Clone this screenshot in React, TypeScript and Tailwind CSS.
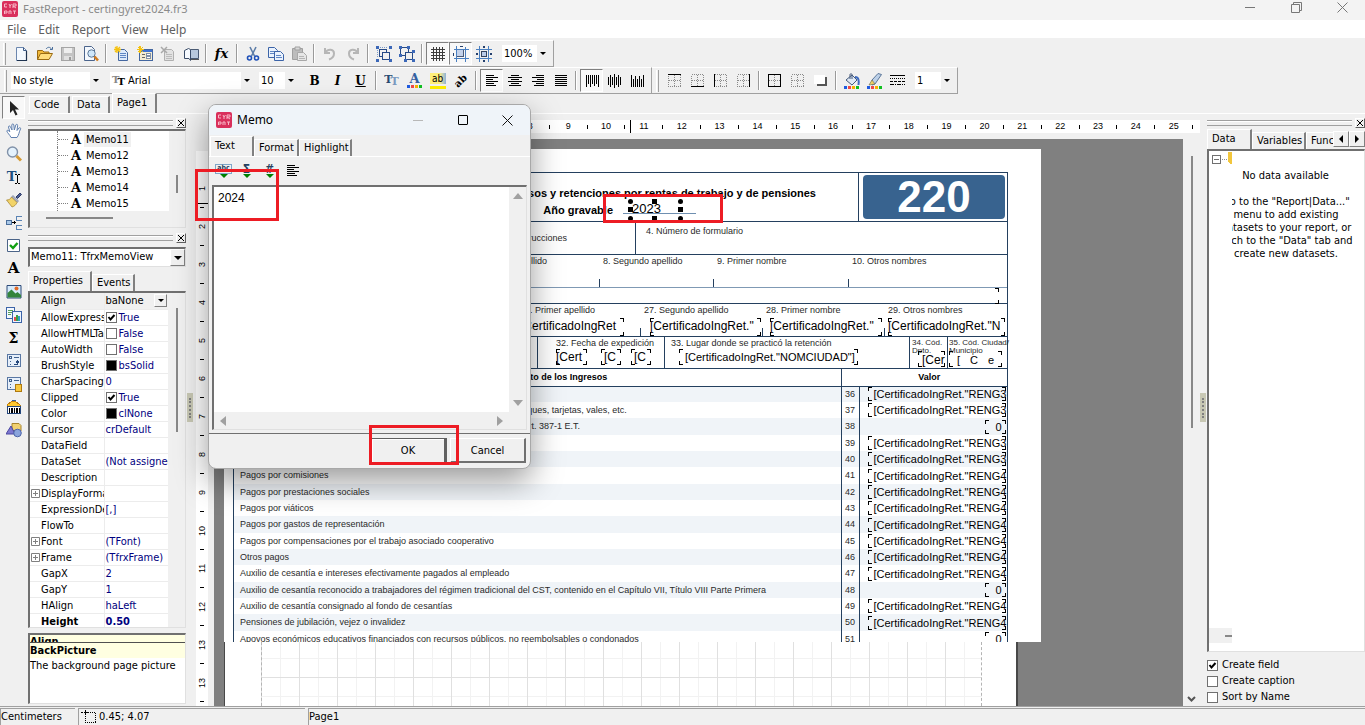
import { type ReactNode } from 'react'

const svgProps = { width: 16, height: 16, viewBox: '0 0 16 16', fill: 'none', 'aria-hidden': true }

const Svg = ({ children, smooth }: { children: ReactNode; smooth?: boolean }) => (
  <svg {...svgProps} shapeRendering={smooth ? 'auto' : 'crispEdges'} className="block shrink-0">{children}</svg>
)

const Palette = () => (
  <>
    <path d="M0 13h3v3H0z" fill="#1f5be0" />
    <path d="M4 13h3v3H4z" fill="#f04848" />
    <path d="M8 13h3v3H8z" fill="#f8b000" />
    <path d="M12 13h3v3h-3z" fill="#10c020" />
  </>
)

const Star = () => <path d="M3 0v7M0 3.5h7M1 1l5 5M6 1L1 6" stroke="#f5c211" strokeWidth="1.3" />

const textLines = (rows: number[][]) => rows.map(([x, y, w]) => <path key={`${x}-${y}`} d={`M${x} ${y}h${w}v1h-${w}z`} fill="#000" />)

const frameDots = (
  <path d="M1.5 1.5h12v12h-12zM7.5 1.5v12M1.5 7.5h12" stroke="#8a8a8a" strokeDasharray="1 1" />
)

const icons: Record<string, ReactNode> = {
  new: <Svg smooth><path d="M2.5 1.5h7l3 3v10h-10z" fill="#f4f9ff" stroke="#6b86ae" /><path d="M9.5 1.5v3h3" stroke="#3d5a85" /><path d="M12.5 5v9.500H3" stroke="#1e3350" strokeWidth="1.2" /></Svg>,
  open: <Svg smooth><path d="M.5 13.5V4.500h5l1.500 1.500h5v2" fill="#f2b93a" stroke="#9a6a12" /><path d="M.5 13.5l3-6h12l-3.500 6z" fill="#ffdc7c" stroke="#9a6a12" /><path d="M9 3c2-2.500 4-2 5.500 0M15.500 1v2.500H13" stroke="#4a6f9c" /></Svg>,
  save: <Svg><path d="M1.500 1.500h13v13h-13z" fill="#c4c4c4" stroke="#a5a5a5" /><path d="M4 2h8v5H4z" fill="#eee" /><path d="M4 10h8v4H4z" fill="#e0e0e0" /><path d="M9 11h2v3H9z" fill="#9c9c9c" /></Svg>,
  preview: <Svg smooth><path d="M1.500.500h7l3 3v11h-10z" fill="#f4f8fd" stroke="#4b648c" /><circle cx="8.500" cy="7.500" r="3.700" fill="#cfe7fa" stroke="#5d7898" /><path d="M11.500 10.500l3.500 4" stroke="#d07a1c" strokeWidth="2.500" /></Svg>,
  newPage: <Svg smooth><path d="M4.500 3.500h6l3 3v8h-9z" fill="#dce9fb" stroke="#4467a0" /><path d="M6 7.500h6M6 9.500h6M6 11.500h6" stroke="#5f86c4" /><Star /></Svg>,
  newDialog: <Svg><path d="M2.500 3.500h13v11h-13z" fill="#f4ecd2" stroke="#4467a0" /><path d="M3 4h12v2H3z" fill="#3f73d0" /><path d="M5 8h3M5 11h3" stroke="#666" /><path d="M9.500 7.500h4v2h-4zM9.500 10.500h4v2h-4z" fill="#fff" stroke="#8090a8" /><Star /></Svg>,
  deletePage: <Svg smooth><path d="M4.500 3.500h7l2 2v9h-9z" fill="#e2e2e2" stroke="#b0b0b0" /><path d="M6 8.500h6M6 10.500h6M6 12.500h6" stroke="#bcbcbc" /><path d="M1 1l6 6M7 1L1 7" stroke="#a8a8a8" strokeWidth="1.500" /></Svg>,
  pageSettings: <Svg smooth><path d="M7.500 3.500h8v9h-8z" fill="#b8c8dc" stroke="#4a5b74" /><path d="M1.500 4.500l4-2 2 1v11l-1.500-2h-4.500z" fill="#f6faff" stroke="#3a4c68" /><path d="M8 13.500h8" stroke="#555" /></Svg>,
  cut: <Svg smooth><path d="M5 1l4.500 9M11 1L6.500 10" stroke="#5d7da8" strokeWidth="1.600" /><circle cx="4.500" cy="12" r="2" stroke="#1e50b8" strokeWidth="1.600" /><circle cx="11.500" cy="12" r="2" stroke="#1e50b8" strokeWidth="1.600" /></Svg>,
  copy: <Svg smooth><path d="M.5 1.500h6l3 3v7h-9z" fill="#eaf2fd" stroke="#3c64a8" /><path d="M2 5.500h5M2 7.500h5" stroke="#5f86c4" /><path d="M6.500 5.500h6l3 3v6h-9z" fill="#eaf2fd" stroke="#3c64a8" /><path d="M8 9.500h5M8 11.500h6" stroke="#5f86c4" /></Svg>,
  paste: <Svg smooth><path d="M1.500 2.500h10v11h-10z" fill="#bcbcbc" stroke="#a0a0a0" /><path d="M4 1h5v3H4z" fill="#d8d8d8" stroke="#a0a0a0" /><path d="M6.500 6.500h6l3 3v5h-9z" fill="#e6e6e6" stroke="#a8a8a8" /><path d="M8 10.500h5M8 12.500h6" stroke="#b4b4b4" /></Svg>,
  undo: <Svg smooth><path d="M3 2v5h5M3.500 6.500C6 2.500 12 3 12 7.500c0 3-2 5-5 6" stroke="#b6b6b6" strokeWidth="2" /></Svg>,
  redo: <Svg smooth><path d="M13 2v5H8M12.500 6.500C10 2.500 4 3 4 7.500c0 3 2 5 5 6" stroke="#b6b6b6" strokeWidth="2" /></Svg>,
  group: <Svg><path d="M3.500 3.500h7v7h-7z" stroke="#274a86" /><path d="M6.500 6.500h7v7h-7z" fill="#f0f0f0" stroke="#274a86" /><path d="M0 0h3v3H0zM13 0h3v3h-3zM0 13h3v3H0zM13 13h3v3h-3z" fill="#3c68b8" /><path d="M4 1.500h8M1.500 4v8" stroke="#7d9bc8" strokeDasharray="1 1" /></Svg>,
  ungroup: <Svg><path d="M1.500 1.500h8v8h-8z" stroke="#274a86" /><path d="M6.500 6.500h7v7h-7z" fill="#f0f0f0" stroke="#274a86" /><path d="M0 0h3v3H0zM8 0h3v3H8zM0 8h3v3H0zM13 4h3v3h-3zM5 13h3v3H5zM13 13h3v3h-3z" fill="#3c68b8" /></Svg>,
  grid: <Svg><path d="M3.500 1v14M6.500 1v14M9.500 1v14M12.500 1v14M1 3.500h14M1 6.500h14M1 9.500h14M1 12.500h14" stroke="#3c3c3c" /></Svg>,
  alignGrid: <Svg><path d="M3.500 0v16M12.500 1v15M1 3.500h15M1 12.500h15" stroke="#4a7fc0" /><path d="M4 4h7v7H4z" fill="#c4d2ea" /><path d="M10.500 4v6.500H4" stroke="#4a5a78" /><path d="M7 0h3v1H7zM0 7h1v3H0z" fill="#24406e" /></Svg>,
  fitGrid: <Svg><path d="M3.500 0v16M12.500 0v16M0 3.500h16M0 12.500h16" stroke="#4a7fc0" /><path d="M5.500 5.500h5v5h-5z" fill="#b9cbe8" stroke="#33435e" /><path d="M7 0h2v2H7zM7 14h2v2H7zM0 7h2v2H0zM14 7h2v2h-2z" fill="#24406e" /></Svg>,
  left: <Svg>{textLines([[2, 2, 8], [2, 4, 12], [2, 6, 7], [2, 8, 12], [2, 10, 8], [2, 12, 10]])}</Svg>,
  center: <Svg>{textLines([[4, 2, 8], [1, 4, 14], [4, 6, 8], [1, 8, 14], [4, 10, 8], [2, 12, 12]])}</Svg>,
  right: <Svg>{textLines([[6, 2, 8], [2, 4, 12], [7, 6, 7], [2, 8, 12], [6, 10, 8], [4, 12, 10]])}</Svg>,
  justify: <Svg>{textLines([[2, 2, 12], [2, 4, 12], [2, 6, 12], [2, 8, 12], [2, 10, 12], [2, 12, 12]])}</Svg>,
  top: <Svg><path d="M2.500 2v12M4.500 2v9M6.500 2v12M8.500 2v9M10.500 2v11M12.500 2v9M14.500 2v12" stroke="#000" /></Svg>,
  middle: <Svg><path d="M1.500 4v8M3.500 2v12M5.500 4v8M7.500 1v14M9.500 4v8M11.500 2v12M13.500 4v8" stroke="#000" /></Svg>,
  bottom: <Svg><path d="M1.500 2v12M3.500 6v8M5.500 3v11M7.500 6v8M9.500 3v11M11.500 6v8M13.500 2v12" stroke="#000" /></Svg>,
  bTop: <Svg>{frameDots}<path d="M1 1h13v1H1z" fill="#000" /></Svg>,
  bBottom: <Svg>{frameDots}<path d="M1 13h13v1H1z" fill="#000" /></Svg>,
  bLeft: <Svg>{frameDots}<path d="M1 1h1v13H1z" fill="#000" /></Svg>,
  bRight: <Svg>{frameDots}<path d="M13 1h1v13h-1z" fill="#000" /></Svg>,
  bAll: <Svg>{frameDots}<path d="M1.500 1.500h12v12h-12z" stroke="#000" /></Svg>,
  bNone: <Svg>{frameDots}</Svg>,
  shadow: <Svg><path d="M4 4h10v9H4z" fill="#555" /><path d="M1 2h11v9H1z" fill="#fff" /></Svg>,
  fill: <Svg smooth><path d="M2 7l6-5 5 5-5 5z" fill="#dfe9f5" stroke="#44597a" /><path d="M6 6V1.500c0-1 2-1 2 0V6" stroke="#44597a" /><path d="M11 4c4 0 4 4 3.500 8" stroke="#3f6bc0" strokeWidth="2" /><Palette /></Svg>,
  pen: <Svg smooth><path d="M5 7l6-6.500 3.500 1L8 11l-3 1z" fill="#bcd0e8" stroke="#5c7799" /><path d="M2 12l3-5 3 4z" fill="#f0d060" stroke="#6a6a50" strokeWidth=".6" /><Palette /></Svg>,
  lineStyle: <Svg><path d="M0 2.500h15" stroke="#000" /><path d="M0 5.500h15" stroke="#000" strokeDasharray="1 1" /><path d="M0 8.500h15" stroke="#000" strokeDasharray="3 1" /><path d="M0 11.500h15" stroke="#000" strokeDasharray="4 1 1 1" /></Svg>,
  arrow: <Svg smooth><path d="M4 1v12l3-3 2.500 5.500 2-1L9 9.500h4z" fill="#222" /></Svg>,
  hand: <Svg smooth><path d="M5 14.500C4 12 1 9.500.8 8c0-1 1.500-1 3 .8L2.500 4c0-1.400 1.500-1.400 2 0L6 7 5.800 2c.2-1.500 1.800-1.300 2 0L8.300 7l1.500-5c.5-1.200 2-.8 1.800.5L11 7.500l2-2.500c1-.8 2 0 1.500 1-1.500 3-1.500 6-3.500 8.500z" fill="#fff" stroke="#5f7fae" /></Svg>,
  zoom: <Svg smooth><circle cx="6.500" cy="6" r="5" fill="#e4f2fd" stroke="#8091a8" strokeWidth="1.400" /><path d="M10.500 10l4.500 4.500" stroke="#d49a35" strokeWidth="3" /></Svg>,
  brush: <Svg smooth><path d="M10 5l4-4 1.500 1.500-4 4z" fill="#4b5d94" stroke="#2f3b66" /><path d="M7 3.500l5.500 5.500-1.500 1.500L5.500 5z" fill="#a9b2c8" stroke="#6d7690" strokeWidth=".6" /><path d="M5.500 5l5.500 5.500C10 13 8 14.500 6 15L.5 8C3 8 4.500 7 5.500 5z" fill="#f2d469" stroke="#a08030" strokeWidth=".7" /></Svg>,
  bands: <Svg><path d="M0 5.500h5v4H0z" fill="#a9c8e8" stroke="#4b6f9c" /><path d="M6 7.500h4M8.500 6v3" stroke="#000" /><path d="M15.500 1.500h-5v4h5M15.500 10.500h-5v4h5" stroke="#5a83b4" /></Svg>,
  check: <Svg smooth><path d="M1.500 1.500h12v12h-12z" fill="#fff" stroke="#4b6488" /><path d="M4 7l3 3 4.500-5" stroke="#12a012" strokeWidth="2.400" /></Svg>,
  picture: <Svg smooth><path d="M1 1.500h14v12.500H1z" fill="#d6eafc" stroke="#2c4a78" /><path d="M1.500 13.500V9l4-3.500 4 4 2-1.500 3.500 3v2.500z" fill="#33843c" /><circle cx="10.500" cy="4.500" r="2" fill="#e06a28" /></Svg>,
  subreport: <Svg><path d="M.5.500h8v11h-8z" fill="#f4f8ff" stroke="#3c64a8" /><path d="M2 3h5M2 5h5M2 7h3" stroke="#58a058" /><path d="M6.500 4.500h9v11h-9z" fill="#eef5ff" stroke="#3c64a8" /><path d="M8 10h2v4H8z" fill="#e05050" /><path d="M10 8h2v6h-2z" fill="#40a040" /><path d="M12 9h2v5h-2z" fill="#30a0c0" /></Svg>,
  crosstab: <Svg><path d="M1.500 1.500h13v12h-13z" fill="#e6effa" stroke="#5a78a4" /><path d="M3.500 3.500h2v2h-2zM8 4.500h5M4 8v1M4 11v1" stroke="#41618e" /><path d="M8 11.500h3.500V8M10 9.500l1.500-2 1.500 2" stroke="#24477c" /></Svg>,
  dbcross: <Svg><path d="M1.500 1.500h13v12h-13z" fill="#e6effa" stroke="#5a78a4" /><path d="M3.500 3.500h2v2h-2zM8 4.500h5M4 8v1M4 11v1" stroke="#41618e" /><path d="M9.500 8.500h6v7h-6z" fill="#f8c840" stroke="#b07a10" /></Svg>,
  barcode: <Svg><path d="M1 6l5-4h3l5 4v2H1z" fill="#ffc830" stroke="#c08010" /><path d="M6 2V1h3v1" stroke="#3c64a8" /><path d="M1.500 7.500h13v7h-13z" fill="#fff" stroke="#24477c" /><path d="M3 9h1v5H3zM5 9h2v5H5zM8 9h1v5H8zM10 9h2v5h-2zM13 9h1v5h-1z" fill="#000" /></Svg>,
  shapes: <Svg smooth><path d="M6 1.500h7l2 2V9H8L6 7z" fill="#f0d070" stroke="#a8842c" /><path d="M0 12l5-8 4 8z" fill="#7d78d0" stroke="#4b46a0" /><circle cx="11.500" cy="11" r="3.800" fill="#8aa4dc" stroke="#4b62a8" /></Svg>,
}

const glyphs: Record<string, ReactNode> = {
  fx: <span className="font-['DejaVu_Serif',serif] text-[13px] font-bold italic">fx</span>,
  bold: <span className="font-['DejaVu_Serif',serif] text-[12px] font-bold">B</span>,
  italic: <span className="font-['DejaVu_Serif',serif] text-[12px] font-bold italic">I</span>,
  underline: <span className="font-['DejaVu_Serif',serif] text-[12px] font-bold underline">U</span>,
  font: <span className="flex font-['DejaVu_Serif',serif] text-[11px] font-bold text-[#274a70]">T<span className="-ml-0.5 mt-0.5 text-[#7c9ac0]">T</span></span>,
  color: (
    <span className="flex flex-col items-center font-['DejaVu_Serif',serif] text-[13px] leading-[12px] font-bold text-[#3560a0]">
      A
      <svg width="16" height="4" viewBox="0 13 16 4" aria-hidden><Palette /></svg>
    </span>
  ),
  highlight: (
    <span className="flex w-4 flex-col">
      <span className="bg-linear-to-r from-[#fff07a] from-60% to-[#8fb0d8] text-[10px] leading-[11px]">ab</span>
      <span className="mt-0.5 h-[3px] bg-[#ffee00]" />
    </span>
  ),
  rotate: <span className="-rotate-45 font-['DejaVu_Serif',serif] text-[10px] font-bold">ab</span>,
  text: (
    <span className="flex items-center font-['DejaVu_Serif',serif] text-[13px] font-bold text-[#1f5080]">
      T
      <svg width="5" height="10" viewBox="0 0 5 10" shapeRendering="crispEdges" className="mt-1 -ml-px" aria-hidden><path d="M0 .500h2M3 .500h2M2.500 1v8M0 9.500h2M3 9.500h2" stroke="#000" /></svg>
    </span>
  ),
  memo: <span className="font-['DejaVu_Serif',serif] text-[15px] font-bold">A</span>,
  sigma: <span className="font-['DejaVu_Serif',serif] text-[14px] font-bold">Σ</span>,
}

const mainTools = ['new', 'open', 'save', 'preview', '|', 'newPage', 'newDialog', 'deletePage', 'pageSettings', '|', 'fx', '|', 'cut', 'copy', 'paste', '|', 'undo', 'redo', '|', 'group', 'ungroup', '|', 'grid*', 'alignGrid*', 'fitGrid']
const textTools = ['bold', 'italic', 'underline', '|', 'font', 'color', 'highlight', 'rotate', '|', 'left*', 'center', 'right', 'justify', '|', 'top*', 'middle', 'bottom']
const frameTools = ['bTop', 'bBottom', 'bLeft', 'bRight', '|', 'bAll', 'bNone', 'shadow', '|', 'fill', 'pen', 'lineStyle']
const sideTools = ['arrow*', 'hand', 'zoom', 'text', 'brush', 'bands', 'check', 'memo', 'picture', 'subreport', 'sigma', 'crosstab', 'dbcross', 'barcode', 'shapes']

const ToolButton = ({ name }: { name: string }) => {
  const pressed = name.endsWith('*')
  const id = name.replace('*', '')
  return (
    <button
      aria-label={id}
      aria-pressed={pressed}
      className={`flex h-[23px] w-[23px] shrink-0 items-center justify-center leading-none ${pressed ? 'border border-t-[#808080] border-l-[#808080] border-r-white border-b-white bg-[#f8f8f8]' : ''}`}
    >
      {icons[id] ?? glyphs[id]}
    </button>
  )
}

const Tools = ({ items }: { items: string[] }) => (
  <>
    {items.map((t, i) => t === '|'
      ? <span key={i} className="mx-[3px] h-[19px] w-[2px] border-l border-[#9a9a9a] bg-white" />
      : <ToolButton key={i} name={t} />)}
  </>
)

const Triangle = () => <span className="block border-x-[3px] border-t-[3px] border-x-transparent border-t-black" />

const Combo = ({ label, value, className, icon }: { label: string; value: string; className: string; icon?: ReactNode }) => (
  <div className={`relative flex h-[17px] shrink-0 items-center bg-white ${className}`}>
    {icon}
    <select aria-label={label} className="h-full w-full min-w-0 flex-1 appearance-none bg-transparent pl-0.5 leading-none outline-none">
      <option>{value}</option>
    </select>
    <span className="pointer-events-none absolute top-0 right-0 flex h-full w-3 items-center justify-center bg-[#f0f0f0]"><Triangle /></span>
  </div>
)

const Grip = () => <span className="mr-1 h-[22px] w-[3px] shrink-0 border-r border-r-[#a0a0a0] border-l border-l-white" />

const AppIcon = () => (
  <svg width="16" height="16" viewBox="0 0 16 16" className="shrink-0" aria-hidden>
    <rect width="16" height="16" rx="2" fill="#d9305c" />
    <path d="M5 3H2.500v3H5M7 3l1 2v2M9.500 3L8 5M11 7V3h3v2h-3l3 2M2.500 13v-3H5v2H2.500M7 13v-3h2v3M11 10h3M12.500 10v3" stroke="#f8b8c8" fill="none" />
  </svg>
)

const PanelGrip = () => (
  <div className="flex h-[11px] items-center gap-[3px]">
    <span className="h-[6px] flex-1 border-y border-[#a0a0a0] bg-[#f0f0f0] shadow-[inset_0_1px_0_#fff]" />
    <button aria-label="Close panel" className="flex h-[10px] w-[10px] items-center justify-center border border-t-white border-l-white border-r-[#606060] border-b-[#606060]">
      <svg width="6" height="6" viewBox="0 0 6 6" aria-hidden><path d="M0 0l6 6M6 0L0 6" stroke="#000" /></svg>
    </button>
  </div>
)

const Tab = ({ children, active, className = '' }: { children: ReactNode; active?: boolean; className?: string }) => (
  <button
    role="tab"
    aria-selected={!!active}
    className={`shrink-0 border-t border-r-2 border-l border-t-white border-r-[#808080] border-l-white text-left whitespace-nowrap ${active ? 'h-5 pb-0.5' : 'h-[17px]'} px-1 leading-4 ${className}`}
  >
    {children}
  </button>
)

const CheckBox = ({ label, checked, className = 'gap-1' }: { label: string; checked?: boolean; className?: string }) => (
  <label className={`flex items-center ${className}`}>
    <span className="relative h-[11px] w-[11px] shrink-0">
      <input type="checkbox" defaultChecked={checked} className="peer absolute inset-0 appearance-none border border-[#707070] bg-white" />
      <svg viewBox="0 0 11 11" className="pointer-events-none absolute inset-0 hidden peer-checked:block" aria-hidden><path d="M2.500 5l2 2.500L8.500 3" stroke="#000" strokeWidth="2" fill="none" /></svg>
    </span>
    {label}
  </label>
)

const sunken = 'border-t-2 border-l-2 border-r border-b border-t-[#707070] border-l-[#707070] border-r-[#e0e0e0] border-b-[#e0e0e0]'

type Property = { name: string; value?: string; kind?: 'on' | 'off' | 'swatch'; plus?: boolean }

const properties: Property[] = [
  { name: 'Align', value: 'baNone' },
  { name: 'AllowExpressions', value: 'True', kind: 'on' },
  { name: 'AllowHTMLTags', value: 'False', kind: 'off' },
  { name: 'AutoWidth', value: 'False', kind: 'off' },
  { name: 'BrushStyle', value: 'bsSolid', kind: 'swatch' },
  { name: 'CharSpacing', value: '0' },
  { name: 'Clipped', value: 'True', kind: 'on' },
  { name: 'Color', value: 'clNone', kind: 'swatch' },
  { name: 'Cursor', value: 'crDefault' },
  { name: 'DataField' },
  { name: 'DataSet', value: '(Not assigned)' },
  { name: 'Description' },
  { name: 'DisplayFormat', plus: true },
  { name: 'ExpressionDelimiters', value: '[,]' },
  { name: 'FlowTo' },
  { name: 'Font', value: '(TFont)', plus: true },
  { name: 'Frame', value: '(TfrxFrame)', plus: true },
  { name: 'GapX', value: '2' },
  { name: 'GapY', value: '1' },
  { name: 'HAlign', value: 'haLeft' },
  { name: 'Height', value: '0.50' },
]

const PropertyGrid = () => (
  <div className={`flex h-[337px] shrink-0 overflow-hidden ${sunken}`}>
    <table className="w-[138px] table-fixed border-collapse bg-white">
      <tbody>
        {properties.map((p, i) => (
          <tr key={p.name} className={`h-4 border-b border-[#ececec] ${i === 0 ? 'bg-[#f0f0f0]' : ''} ${p.name === 'Height' ? 'font-bold' : ''}`}>
            <th scope="row" className="w-[74px] overflow-hidden border-r border-[#ececec] p-0 text-left leading-[15px] [font-weight:inherit]">
              <div className="flex h-[15px] items-center whitespace-nowrap">
                <span className="w-[11px] shrink-0 pl-px">
                  {p.plus && <svg width="9" height="9" viewBox="0 0 9 9" aria-hidden><path d="M.5.500h8v8h-8zM2 4.500h5M4.500 2v5" stroke="#808080" fill="#fff" /></svg>}
                </span>
                {p.name}
              </div>
            </th>
            <td className="overflow-hidden p-0 pl-px leading-[15px] text-[#000080]">
              <div className="flex h-[15px] items-center gap-0.5 whitespace-nowrap">
                {i === 0 ? (
                  <>
                    <span className="flex-1 text-black">{p.value}</span>
                    <button aria-label="Choose Align" className="mr-px flex h-[13px] w-[13px] items-center justify-center border border-r-[#808080] border-b-[#808080] border-t-white border-l-white bg-[#f0f0f0]"><Triangle /></button>
                  </>
                ) : p.kind === 'on' || p.kind === 'off' ? (
                  <CheckBox label={p.value!} checked={p.kind === 'on'} className="gap-0.5" />
                ) : (
                  <>
                    {p.kind === 'swatch' && <span className="h-[11px] w-[11px] border border-[#707070] bg-black" />}
                    {p.value}
                  </>
                )}
              </div>
            </td>
          </tr>
        ))}
      </tbody>
    </table>
    <div className="flex flex-1 flex-col items-center pt-[15px]"><span className="h-[124px] w-[2px] bg-[#888]" /></div>
  </div>
)

const LeftPanel = () => (
  <div className="flex w-[158px] shrink-0 flex-col pt-[3px]">
    <PanelGrip />
    <div className={`mt-px flex h-[99px] shrink-0 flex-col ${sunken}`}>
      <div className="flex">
        <ul className="w-[139px] bg-white pl-[27px]">
          {['Memo11', 'Memo12', 'Memo13', 'Memo14', 'Memo15'].map((m, i) => (
            <li key={m} className="flex h-4 items-center border-l border-dotted border-[#808080]">
              <span className="w-2.5 border-t border-dotted border-[#808080]" />
              <span className="w-4 text-center font-['DejaVu_Serif',serif] text-[13px] leading-none font-bold">A</span>
              <span className={`px-0.5 leading-[15px] ${i === 0 ? 'bg-[#f0f0f0]' : ''}`}>{m}</span>
            </li>
          ))}
        </ul>
        <div className="flex flex-1 items-end justify-center pb-[18px]"><span className="h-[18px] w-[2px] bg-[#888]" /></div>
      </div>
      <span className="mt-1.5 ml-4 h-[2px] w-[67px] bg-[#888]" />
    </div>
    <div className="mt-[4px]"><PanelGrip /></div>
    <div className={`relative mt-[4px] flex h-[20px] shrink-0 items-center bg-white ${sunken}`}>
      <select aria-label="Object" className="w-full appearance-none pl-px outline-none"><option>Memo11: TfrxMemoView</option></select>
      <span className="pointer-events-none absolute top-0 right-0 flex h-full w-[15px] items-center justify-center border border-r-[#808080] border-b-[#808080] border-t-white border-l-white bg-[#f0f0f0]"><span className="border-x-[4px] border-t-[4px] border-x-transparent border-t-black" /></span>
    </div>
    <div role="tablist" className="mt-1 flex shrink-0 items-end">
      <Tab active className="w-[64px]">Properties</Tab>
      <Tab className="w-[43px]">Events</Tab>
    </div>
    <PropertyGrid />
    <div className={`mt-[5px] flex h-[71px] shrink-0 flex-col bg-white leading-[15px] ${sunken}`}>
      <div className="h-[8px] shrink-0 overflow-hidden border-b border-[#505050] bg-[#ffffe1] font-bold leading-[14px]">Align</div>
      <div className="bg-[#ffffe1] font-bold">BackPicture</div>
      <div className="whitespace-nowrap">The background page picture</div>
    </div>
  </div>
)

/* corner brackets that mark the edges of a text object */
const Memo = ({ children, className = '' }: { children?: ReactNode; className?: string }) => (
  <div className={`relative shrink-0 font-['Liberation_Sans',sans-serif] whitespace-nowrap text-black ${className}`}>
    {children}
    <span className="absolute top-0 left-0 size-1 border-t border-l border-black" />
    <span className="absolute top-0 right-0 size-1 border-t border-r border-black" />
    <span className="absolute bottom-0 left-0 size-1 border-b border-l border-black" />
    <span className="absolute right-0 bottom-0 size-1 border-r border-b border-black" />
  </div>
)

const NameCell = ({ label, className, children }: { label: string; className: string; children?: ReactNode }) => (
  <div className={`flex shrink-0 ${className}`}>
    <span className="h-2 w-px self-end bg-[#24405f]" />
    <div className="flex flex-1 flex-col pl-[3px] whitespace-nowrap">
      <span className="leading-3">{label}</span>
      {children}
    </div>
  </div>
)

const rows = [
  ['36', 'Pagos por salarios', '3'],
  ['37', 'Pagos realizados con los bonos electrónicos o de papel de servicio, cheques, tarjetas, vales, etc.', '3'],
  ['38', 'Valor del exceso de los pagos por alimentación mayores a las 41 UVT, art. 387-1 E.T.', ''],
  ['39', 'Pagos por honorarios', '3'],
  ['40', 'Pagos por servicios', '3'],
  ['41', 'Pagos por comisiones', '4'],
  ['42', 'Pagos por prestaciones sociales', '4'],
  ['43', 'Pagos por viáticos', '4'],
  ['44', 'Pagos por gastos de representación', '4'],
  ['45', 'Pagos por compensaciones por el trabajo asociado cooperativo', '4'],
  ['46', 'Otros pagos', '4'],
  ['47', 'Auxilio de cesantía e intereses efectivamente pagados al empleado', '4'],
  ['48', 'Auxilio de cesantía reconocido a trabajadores del régimen tradicional del CST, contenido en el Capítulo VII, Título VIII Parte Primera', ''],
  ['49', 'Auxilio de cesantía consignado al fondo de cesantías', '4'],
  ['50', 'Pensiones de jubilación, vejez o invalidez', '4'],
  ['51', 'Apoyos económicos educativos financiados con recursos públicos, no reembolsables o condonados', ''],
]

const handles = [
  '-top-0.5 -left-0.5 rounded-full', '-top-0.5 left-[22px]', '-top-0.5 -right-0.5 rounded-full',
  'top-1.5 -left-0.5', 'top-1.5 -right-0.5',
  '-bottom-0.5 -left-0.5 rounded-full', '-bottom-0.5 left-[22px]', '-bottom-0.5 -right-0.5 rounded-full',
]

const ReportForm = () => (
  <div className="mt-[23px] ml-2 w-[775px] border border-b-0 border-[#24405f] font-['Liberation_Sans',sans-serif] text-[9px] text-[#2a2a2a]">
    <div className="flex h-[49px] border-b border-[#24405f]">
      <div className="flex w-[625px] shrink-0 flex-col items-end border-r border-[#24405f] pt-3 font-bold text-black">
        <div className="pr-[42px] text-[11px] leading-4 whitespace-nowrap">Certificado de ingresos y retenciones por rentas de trabajo y de pensiones</div>
        <div className="flex pr-[162px] text-[11px] leading-[18px] whitespace-nowrap">
          Año gravable
          <div className="ml-2.5 h-[13px] w-[73px] border-b border-[#6f8fb0] pl-[7px] font-normal">
            <div className="relative h-[18px] w-[51px] pl-0.5 text-[13px] leading-4">
              2023
              {handles.map((h) => <span key={h} className={`absolute size-[5px] bg-black ${h}`} />)}
            </div>
          </div>
        </div>
      </div>
      <div className="flex-1 p-[2px] pl-1">
        <div className="flex h-[44px] items-center justify-center rounded-[4px] bg-[#38638f] text-[44px] leading-none font-bold text-white">220</div>
      </div>
    </div>
    <div className="flex h-[33px] border-b border-[#24405f] whitespace-nowrap">
      <div className="w-[402px] border-r border-[#24405f] pt-2.5 pr-[68px] text-right">Lea cuidadosamente las instrucciones</div>
      <div className="pt-[3px] pl-2.5">4. Número de formulario</div>
    </div>
    <div className="flex h-[33px] border-b border-[#7f99b4]">
      <div className="w-[365px] pr-[52px] text-right leading-3">7. Primer apellido</div>
      <NameCell label="8. Segundo apellido" className="w-[114px]" />
      <NameCell label="9. Primer nombre" className="w-[135px]" />
      <NameCell label="10. Otros nombres" className="flex-1" />
    </div>
    <div className="flex h-4 justify-end border-b border-[#24405f] pr-2"><Memo className="h-4 w-[500px]" /></div>
    <div className="flex h-[33px] border-b border-[#24405f]">
      <NameCell label="26. Primer apellido" className="ml-[282px] w-[124px]"><Memo className="mt-0.5 h-[18px] w-[104px] text-[12px] leading-4">[CertificadoIngRet</Memo></NameCell>
      <NameCell label="27. Segundo apellido" className="w-[122px]"><Memo className="mt-0.5 ml-[6px] h-[18px] w-[111px] text-[12px] leading-4">[CertificadoIngRet."</Memo></NameCell>
      <NameCell label="28. Primer nombre" className="w-[122px]"><Memo className="mt-0.5 ml-[4px] h-[18px] w-[112px] text-[12px] leading-4">[CertificadoIngRet."</Memo></NameCell>
      <NameCell label="29. Otros nombres" className="flex-1"><Memo className="mt-0.5 h-[18px] w-[117px] text-[12px] leading-4">[CertificadoIngRet."N</Memo></NameCell>
    </div>
    <div className="flex h-8 border-b border-[#24405f] whitespace-nowrap">
      <div className="w-[304px] shrink-0 border-r border-[#24405f]" />
      <div className="w-[127px] shrink-0 border-r border-[#24405f] pl-[18px]">
        <div className="leading-3">32. Fecha de expedición</div>
        <div className="flex text-[12px] leading-4">
          <Memo className="h-4 w-[31px]">[Cert</Memo>
          <Memo className="ml-[14px] h-4 w-[20px] pl-[3px]">[C</Memo>
          <Memo className="ml-[10px] h-4 w-[20px] pl-[3px]">[C</Memo>
        </div>
      </div>
      <div className="w-[245px] shrink-0 border-r border-[#24405f] pl-[6px]">
        <div className="leading-3">33. Lugar donde se practicó la retención</div>
        <Memo className="ml-2 h-4 w-[179px] pl-1.5 text-[11px] leading-4">[CertificadoIngRet."NOMCIUDAD"]</Memo>
      </div>
      <div className="w-[38px] shrink-0 border-r border-[#24405f] pt-0.5 pl-0.5 text-[8px] leading-2">
        34. Cód.<br />Dpto.
        <Memo className="-mt-1 ml-1.5 h-4 w-[27px] pl-1 text-[12px] leading-[18px]">[Cer</Memo>
      </div>
      <div className="pt-0.5 pl-px text-[8px] leading-2">
        35. Cód. Ciudad/<br />Municipio
        <Memo className="-mt-1 h-4 w-[53px] text-[11px] leading-[18px]"><span className="flex gap-2.5 pl-2"><span>[</span><span>C</span><span>e</span></span></Memo>
      </div>
    </div>
    <table className="w-full table-fixed border-collapse">
      <colgroup><col className="w-[607px]" /><col className="w-[18px]" /><col /></colgroup>
      <thead>
        <tr className="h-[17px] border-b border-[#24405f] text-[9px] text-black">
          <th className="border-r border-[#24405f] p-0 pl-[30px] leading-none">Concepto de los Ingresos</th>
          <th colSpan={2} className="p-0 pl-2.5 leading-none">Valor</th>
        </tr>
      </thead>
      <tbody>
        {rows.map(([num, text, reng], i) => (
          <tr key={num} className={`${i % 3 === 2 ? 'h-[17px]' : 'h-4'} ${i % 2 === 0 ? 'bg-[#f0f4f8]' : ''}`}>
            <td className="border-r border-[#24405f] p-0 pl-[6px] leading-none whitespace-nowrap">{text}</td>
            <td className="border-r border-[#24405f] p-0 text-center leading-none">{num}</td>
            <td className="p-0 leading-none">
              {reng
                ? <Memo className="ml-2 h-[14px] w-[138px] pl-1.5 text-[11px] leading-[15px]">{`[CertificadoIngRet."RENG${reng}`}</Memo>
                : <Memo className="ml-[125px] h-[14px] w-[21px] pr-1 text-right text-[11px] leading-[15px]">0</Memo>}
            </td>
          </tr>
        ))}
      </tbody>
    </table>
  </div>
)

const Splitter = () => (
  <div className="flex h-[29px] w-[6px] items-center justify-center bg-[#c8c8b4]"><span className="h-5 w-px border-l-2 border-dotted border-[#808080]" /></div>
)

const Designer = () => (
  <div className="flex min-w-0 flex-1 flex-col pl-px">
    <div className="mt-1.5 flex h-[13px] shrink-0 overflow-hidden">
      <div className="w-2 shrink-0" />
      <div className="relative ml-[52px] flex flex-1 items-center bg-white font-['Liberation_Sans',sans-serif] text-[9px]">
        <div className="flex w-[946px] shrink-0">
          {Array.from({ length: 25 }, (_, i) => (
            <span key={i} className="flex flex-1 items-center justify-center">
              <span className="flex-1 text-center">{i + 1}</span>
              <span className="h-1 w-px bg-black" />
            </span>
          ))}
        </div>
        <span className="absolute top-0 left-[383px] h-full w-px bg-black" />
      </div>
      <div className="w-[7px] shrink-0" />
    </div>
    <div className="mt-1.5 flex min-h-0 flex-1">
      <div className="flex w-[9px] shrink-0 flex-col pt-[254px]"><Splitter /></div>
      <div className="relative mt-3 mr-1.5 flex w-3 shrink-0 flex-col overflow-hidden bg-white pt-[19px] font-['Liberation_Sans',sans-serif] text-[9px]">
        {[1, 2, 3, 4, 5, 6, 7, 8, 9, 10, 11, 12, 13, 13].map((n, i) => (
          <span key={i} className="flex h-[38px] shrink-0 flex-col items-center">
            <span className="flex flex-1 rotate-180 items-center justify-center leading-3 [writing-mode:vertical-rl]">{n}</span>
            <span className="h-px w-1 bg-black" />
          </span>
        ))}
        <span className="absolute top-[52px] left-0 h-px w-full bg-black" />
      </div>
      <div className="flex min-w-0 flex-1 flex-col overflow-hidden bg-[#808080] pt-2.5 pl-2.5">
        <div className="z-10 h-[493px] w-[817px] shrink-0 overflow-hidden bg-white pl-px"><ReportForm /></div>
        <div className="flex w-[794px] flex-1 border-r-2 border-l border-[#484848] bg-white pr-[34px] pl-[36px]">
          <div className="flex-1 border-x border-dashed border-[#b4b4b4] bg-[linear-gradient(to_right,transparent_37px,#e0e0e0_37px),linear-gradient(transparent_37px,#e0e0e0_37px),linear-gradient(to_right,transparent_18px,#f2f2f2_18px,#f2f2f2_19px,transparent_19px),linear-gradient(transparent_18px,#f2f2f2_18px,#f2f2f2_19px,transparent_19px)] bg-size-[38px_38px] bg-position-[0_-2px]" />
        </div>
      </div>
      <div className="flex w-[17px] shrink-0 flex-col items-center justify-between pt-[17px] pb-1">
        <span className="h-[272px] w-[2px] bg-[#888]" />
        <svg width="9" height="6" viewBox="0 0 9 6" aria-hidden><path d="M1 1l3.500 3.500L8 1" stroke="#555" strokeWidth="2" fill="none" /></svg>
      </div>
      <div className="w-[7px] shrink-0 pt-[254px]"><Splitter /></div>
    </div>
  </div>
)

const RightPanel = () => (
  <div className="flex w-[158px] shrink-0 flex-col pt-[3px]">
    <PanelGrip />
    <div className="mt-px flex items-end">
      <div role="tablist" className="flex min-w-0 flex-1 items-end overflow-hidden">
        <Tab active className="w-[45px]">Data</Tab>
        <Tab className="w-[54px]">Variables</Tab>
        <Tab className="w-[60px]">Functions</Tab>
      </div>
      <button aria-label="Previous tab" className="flex h-4 w-4 items-center justify-center self-center border border-t-white border-l-white border-r-[#808080] border-b-[#808080]"><span className="border-y-[4px] border-r-[4px] border-y-transparent border-r-black" /></button>
      <button aria-label="Next tab" className="flex h-4 w-4 items-center justify-center self-center border border-t-white border-l-white border-r-[#808080] border-b-[#808080]"><span className="border-y-[4px] border-l-[4px] border-y-transparent border-l-black" /></button>
    </div>
    <div className={`flex h-[503px] shrink-0 flex-col bg-white ${sunken}`}>
      <div className="flex h-[18px] items-center pl-[3px]">
        <svg width="24" height="16" viewBox="0 0 24 16" shapeRendering="crispEdges" aria-hidden>
          <path d="M.5 3.500h8v8h-8zM2 7.500h5" stroke="#707070" fill="#fff" />
          <path d="M10 7.500h5" stroke="#909090" strokeDasharray="1 1" />
          <path d="M16 0h4v12h-2l-2-2z" fill="#f2c63c" />
        </svg>
      </div>
      <p className="pr-0.5 text-center leading-[13px]">No data available</p>
      <div className="mt-[13px] ml-[23px] overflow-hidden leading-[13px] whitespace-nowrap">
        <p className="-ml-6 text-center">Go to the "Report|Data..."</p>
        <p className="-ml-6 text-center">menu to add existing</p>
        <p className="-ml-6 text-center">datasets to your report, or</p>
        <p className="-ml-8 text-center">switch to the "Data" tab and</p>
        <p className="-ml-6 text-center">create new datasets.</p>
      </div>
      <div className="mt-auto mb-2 flex h-[15px] w-[23px] items-center justify-end bg-[#f0f0f0]"><span className="h-[2px] w-[7px] bg-[#888]" /></div>
    </div>
    <div className="mt-[5px] flex flex-col leading-4">
      <CheckBox label="Create field" checked />
      <CheckBox label="Create caption" />
      <CheckBox label="Sort by Name" />
    </div>
  </div>
)

const MemoDialog = () => (
  <div role="dialog" aria-label="Memo" className="absolute top-[104px] left-[208px] z-20 flex h-[365px] w-[323px] flex-col overflow-hidden rounded-lg border border-[#a8a8a8] bg-[#f0f0f0] shadow-[0_12px_32px_rgba(0,0,0,0.4)]">
    <div className="flex h-[30px] shrink-0 items-center bg-[#eff4f9] pl-[7px]">
      <AppIcon />
      <span className="ml-[5px] flex-1 font-['Noto_Sans',sans-serif] text-[12px]">Memo</span>
      <button aria-label="Minimize" className="flex w-[45px] justify-center"><span className="h-px w-2.5 bg-[#b8b8b8]" /></button>
      <button aria-label="Maximize" className="flex w-[45px] justify-center"><span className="size-2.5 rounded-[1px] border border-black" /></button>
      <button aria-label="Close" className="flex w-[45px] justify-center"><svg width="11" height="11" viewBox="0 0 11 11" aria-hidden><path d="M.5.500l10 10M10.500.500l-10 10" stroke="#111" /></svg></button>
    </div>
    <div role="tablist" className="mt-px flex items-end border-b border-white pl-px">
      <Tab active className="w-[44px]">Text</Tab>
      <Tab className="w-[45px]">Format</Tab>
      <Tab className="w-[53px]">Highlight</Tab>
    </div>
    <div className="flex h-[28px] shrink-0 items-center pl-[3px]">
      {['abc', 'Σ', '#'].map((t) => (
        <button key={t} aria-label={`Insert ${t}`} className="flex h-5 w-[23px] flex-col items-center justify-center">
          <span className={`h-[10px] font-bold text-[#24405f] ${t === 'abc' ? 'border border-[#7fa6c8] px-px text-[7px] leading-[7px]' : 'text-[12px] leading-[10px]'}`}>{t}</span>
          <span className="border-x-[4px] border-t-[4px] border-x-transparent border-t-[#008000]" />
        </button>
      ))}
      <ToolButton name="left" />
    </div>
    <div className={`mx-[3px] grid h-[245px] shrink-0 grid-cols-[1fr_17px] grid-rows-[1fr_17px] ${sunken}`}>
      <textarea aria-label="Memo text" defaultValue="2024" className="resize-none bg-white px-1 py-[3px] font-['Liberation_Sans',sans-serif] text-[12px] leading-4 outline-none" />
      <div className="flex flex-col items-center justify-between py-1.5">
        <span className="border-x-[5px] border-b-[6px] border-x-transparent border-b-[#a0a0a0]" />
        <span className="border-x-[5px] border-t-[6px] border-x-transparent border-t-[#a0a0a0]" />
      </div>
      <div className="flex items-center justify-between px-1.5">
        <span className="border-y-[5px] border-r-[6px] border-y-transparent border-r-[#a0a0a0]" />
        <span className="border-y-[5px] border-l-[6px] border-y-transparent border-l-[#a0a0a0]" />
      </div>
    </div>
    <div className="mt-[3px] flex flex-1 justify-end gap-[3px] border-t border-[#707070] pt-1 pr-1">
      <button className="h-[25px] w-[76px] border border-r-[3px] border-[#606060] border-b-[#606060] pt-0.5 shadow-[inset_1px_1px_0_#fff]">OK</button>
      <button className="h-[25px] w-[76px] border border-r-2 border-b-2 border-t-white border-l-white border-r-[#707070] border-b-[#707070] pt-0.5">Cancel</button>
    </div>
  </div>
)

export default function App() {
  return (
    <div className="relative flex h-screen flex-col overflow-hidden bg-[#f0f0f0] font-['DejaVu_Sans_Condensed','DejaVu_Sans',sans-serif] text-[11px] text-black">
      <header className="flex h-5 shrink-0 items-start bg-[#f3f3f3] font-['Noto_Sans',sans-serif] text-[#8a8a8a]">
        <div className="flex flex-1 items-center gap-[5px] pl-0.5"><AppIcon /><span className="leading-[17px]">FastReport - certingyret2024.fr3</span></div>
        <div className="flex h-[14px] items-center">
          <button aria-label="Minimize" className="flex w-[46px] justify-center"><span className="h-px w-2.5 bg-[#777]" /></button>
          <button aria-label="Restore" className="flex w-[46px] justify-center"><svg width="11" height="11" viewBox="0 0 11 11" fill="none" stroke="#777" aria-hidden><path d="M.5 2.500h8v8h-8zM2.500 2.500v-2h8v8h-2" /></svg></button>
          <button aria-label="Close" className="flex w-[46px] justify-center"><svg width="11" height="11" viewBox="0 0 11 11" aria-hidden><path d="M.5.500l10 10M10.500.500l-10 10" stroke="#777" /></svg></button>
        </div>
      </header>
      <nav className="flex h-[18px] shrink-0 items-center gap-3 bg-white pt-0.5 pl-[7px] font-['Noto_Sans',sans-serif] text-[12px] text-[#606060]">
        {['File', 'Edit', 'Report', 'View', 'Help'].map((m) => <button key={m}>{m}</button>)}
      </nav>

      <div className="mt-0.5 flex shrink-0">
        <div className="flex h-[27px] items-center border-t border-r border-b border-t-white border-r-[#a0a0a0] border-b-[#a0a0a0] pr-1 pl-[3px]">
          <Grip />
          <Tools items={mainTools} />
          <Combo label="Zoom" value="100%" className="ml-[7px] w-[47px]" />
        </div>
      </div>
      <div className="flex shrink-0">
        <div className="flex h-[27px] items-center border-t border-r border-b border-t-white border-r-[#a0a0a0] border-b-[#a0a0a0] pr-0.5 pl-1">
          <Grip />
          <Combo label="Style" value="No style" className="w-[91px]" />
          <Combo label="Font" value="Arial" className="ml-2 w-[143px]" icon={<span className="flex w-[16px] shrink-0 pl-0.5 font-['DejaVu_Serif',serif] text-[10px] font-bold text-[#888]">T<span className="-ml-0.5 mt-0.5 text-black">T</span></span>} />
          <Combo label="Size" value="10" className="mr-1.5 ml-[6px] w-[38px]" />
          <Tools items={textTools} />
        </div>
        <div className="flex h-[27px] items-center border-t border-r border-b border-t-white border-r-[#a0a0a0] border-b-[#a0a0a0] pr-1 pl-1">
          <Grip />
          <Tools items={frameTools} />
          <Combo label="Line width" value="1" className="ml-1.5 w-[38px]" />
        </div>
      </div>

      <div className="flex min-h-0 flex-1">
        <div className="flex w-[28px] shrink-0 flex-col pt-[2px] pl-[2px]">
          {sideTools.map((t) => <ToolButton key={t} name={t} />)}
        </div>
        <div className="flex min-w-0 flex-1 flex-col">
          <div role="tablist" className="flex h-5 shrink-0 items-end gap-[2px] border-b border-white pl-px">
            <Tab className="w-[41px]">Code</Tab>
            <Tab className="w-[38px]">Data</Tab>
            <Tab active className="w-[45px]">Page1</Tab>
          </div>
          <div className="flex min-h-0 flex-1">
            <LeftPanel />
            <Designer />
            <RightPanel />
          </div>
        </div>
      </div>

      <footer className="flex h-[19px] shrink-0 gap-[3px] border-t border-[#a0a0a0] pt-px leading-4">
        <div className="w-[75px] border-t border-l border-[#a0a0a0]">Centimeters</div>
        <div className="flex w-[227px] items-center gap-0.5 border-t border-l border-[#a0a0a0] pl-0.5">
          <svg width="16" height="14" viewBox="0 0 16 14" fill="none" shapeRendering="crispEdges" aria-hidden><path d="M4.500 2.500h10v10h-10z" stroke="#000" strokeDasharray="1 1" /><path d="M0 2.500h8M4.500 0v6" stroke="#000" strokeDasharray="2 1" /></svg>
          0.45; 4.07
        </div>
        <div className="flex-1 border-t border-l border-[#a0a0a0]">Page1</div>
      </footer>

      <MemoDialog />
      <span className="pointer-events-none absolute top-[169px] left-[195px] z-30 h-[52px] w-[84px] border-[3px] border-[#ed1c24]" />
      <span className="pointer-events-none absolute top-[194px] left-[603px] z-30 h-[29px] w-[120px] border-[3px] border-[#ed1c24]" />
      <span className="pointer-events-none absolute top-[425px] left-[369px] z-30 h-[40px] w-[90px] border-[3px] border-[#ed1c24]" />
    </div>
  )
}
